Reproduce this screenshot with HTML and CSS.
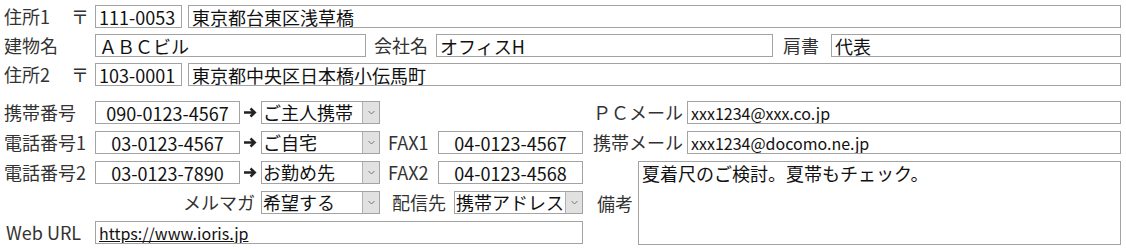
FILE: index.html
```html
<!DOCTYPE html>
<html lang="ja">
<head>
  <meta charset="UTF-8">
  <title>顧客情報</title>
  <link rel="stylesheet" href="styles.css">
</head>
<body>
<form class="sheet">
  <div class="row">
    <label class="lbl">住所1<span class="zip-mark">〒</span></label>
    <input type="text" class="box zip" value="111-0053">
    <input type="text" class="box addr" value="東京都台東区浅草橋">
  </div>
  <div class="row">
    <label class="lbl">建物名</label>
    <input type="text" class="box bldg" value="ＡＢＣビル">
    <label class="inl company-lbl">会社名</label>
    <input type="text" class="box company" value="オフィスH">
    <label class="inl title-lbl">肩書</label>
    <input type="text" class="box title" value="代表">
  </div>
  <div class="row">
    <label class="lbl">住所2<span class="zip-mark">〒</span></label>
    <input type="text" class="box zip" value="103-0001">
    <input type="text" class="box addr" value="東京都中央区日本橋小伝馬町">
  </div>

  <div class="lower">
    <div class="lower-left">
      <div class="row">
        <label class="lbl">携帯番号</label>
        <input type="text" class="box tel" value="090-0123-4567">
        <span class="arrow"><svg width="13" height="11" viewBox="0 0 13 11"><path d="M0 5.5H10.5M6.5 1.5L10.8 5.5L6.5 9.5" fill="none" stroke="#222" stroke-width="2.4"/></svg></span>
        <span class="sel"><select><option>ご主人携帯</option></select><span class="sel-btn"><svg width="7" height="5" viewBox="0 0 7 5"><path d="M0.5 1L3.5 4L6.5 1" fill="none" stroke="#777" stroke-width="1"/></svg></span></span>
      </div>
      <div class="row">
        <label class="lbl">電話番号1</label>
        <input type="text" class="box tel" value="03-0123-4567">
        <span class="arrow"><svg width="13" height="11" viewBox="0 0 13 11"><path d="M0 5.5H10.5M6.5 1.5L10.8 5.5L6.5 9.5" fill="none" stroke="#222" stroke-width="2.4"/></svg></span>
        <span class="sel"><select><option>ご自宅</option></select><span class="sel-btn"><svg width="7" height="5" viewBox="0 0 7 5"><path d="M0.5 1L3.5 4L6.5 1" fill="none" stroke="#777" stroke-width="1"/></svg></span></span>
        <label class="inl fax-lbl">FAX1</label>
        <input type="text" class="box tel" value="04-0123-4567">
      </div>
      <div class="row">
        <label class="lbl">電話番号2</label>
        <input type="text" class="box tel" value="03-0123-7890">
        <span class="arrow"><svg width="13" height="11" viewBox="0 0 13 11"><path d="M0 5.5H10.5M6.5 1.5L10.8 5.5L6.5 9.5" fill="none" stroke="#222" stroke-width="2.4"/></svg></span>
        <span class="sel"><select><option>お勤め先</option></select><span class="sel-btn"><svg width="7" height="5" viewBox="0 0 7 5"><path d="M0.5 1L3.5 4L6.5 1" fill="none" stroke="#777" stroke-width="1"/></svg></span></span>
        <label class="inl fax-lbl">FAX2</label>
        <input type="text" class="box tel" value="04-0123-4568">
      </div>
      <div class="row">
        <label class="lbl mag-lbl">メルマガ</label>
        <span class="sel"><select><option>希望する</option></select><span class="sel-btn"><svg width="7" height="5" viewBox="0 0 7 5"><path d="M0.5 1L3.5 4L6.5 1" fill="none" stroke="#777" stroke-width="1"/></svg></span></span>
        <label class="inl dest-lbl">配信先</label>
        <span class="sel dest"><select><option>携帯アドレス</option></select><span class="sel-btn"><svg width="7" height="5" viewBox="0 0 7 5"><path d="M0.5 1L3.5 4L6.5 1" fill="none" stroke="#777" stroke-width="1"/></svg></span></span>
      </div>
      <div class="row">
        <label class="lbl url-lbl">Web URL</label>
        <input type="text" class="box url" value="https://www.ioris.jp">
      </div>
    </div>

    <div class="lower-right">
      <label class="rlbl">ＰＣメール</label>
      <input type="text" class="box mail" value="xxx1234@xxx.co.jp">
      <label class="rlbl">携帯メール</label>
      <input type="text" class="box mail" value="xxx1234@docomo.ne.jp">
      <div class="memo">
        <label class="memo-lbl">備考</label>
        <textarea class="box memo-box">夏着尺のご検討。夏帯もチェック。</textarea>
      </div>
    </div>
  </div>
</form>
</body>
</html>
```

FILE: styles.css
```css
* {
  box-sizing: border-box;
}
body {
  margin: 0;
  background: #fff;
  color: #333;
  font-family: "Noto Sans CJK JP", sans-serif;
  font-size: 18px;
}
.sheet {
  width: 1126px;
  padding: 5px 5px 0 4px;
}
.row {
  display: flex;
  align-items: center;
  height: 23px;
  margin-bottom: 6px;
  line-height: 23px;
}
.lbl {
  flex: none;
  width: 91px;
  display: flex;
  justify-content: space-between;
  white-space: nowrap;
}
.zip-mark {
  padding-right: 6px;
}
.inl {
  flex: none;
  white-space: nowrap;
}

/* text boxes */
.box {
  height: 23px;
  border: 1px solid #a3a3a3;
  background: #fff;
  color: #111;
  font-family: "Noto Sans CJK JP", sans-serif;
  font-size: 18px;
  padding: 0 3px;
  margin: 0;
  outline: none;
}
.zip {
  width: 87px;
}
.addr {
  flex: 1;
  margin-left: 6px;
}
.bldg {
  width: 271px;
}
.company-lbl {
  margin: 0 8px;
}
.company {
  width: 337px;
}
.title-lbl {
  margin: 0 12px 0 10px;
}
.title {
  width: 290px;
}

/* lower block */
.lower {
  display: flex;
  margin-top: 15px;
}
.lower-left {
  width: 579px;
  flex: none;
}
.lower-left .row {
  margin-bottom: 7px;
}
.tel {
  width: 145px;
  text-align: center;
}
.arrow {
  width: 21px;
  flex: none;
  display: flex;
  justify-content: center;
}
.sel {
  flex: none;
  display: flex;
  width: 119px;
  height: 23px;
  border: 1px solid #a3a3a3;
  background: #fff;
  overflow: hidden;
}
.sel select {
  appearance: none;
  flex: 1;
  min-width: 0;
  height: 21px;
  border: none;
  background: transparent;
  color: #111;
  font-family: "Noto Sans CJK JP", sans-serif;
  font-size: 18px;
  line-height: 21px;
  padding: 0 0 0 1px;
  outline: none;
}
.sel-btn {
  flex: none;
  width: 17px;
  background: #e1e1e1;
  border-left: 1px solid #b0b0b0;
  display: flex;
  align-items: center;
  justify-content: center;
}
.fax-lbl {
  width: 50px;
  margin-left: 8px;
}
.mag-lbl {
  width: 257px;
  justify-content: flex-end;
  padding-right: 6px;
}
.dest-lbl {
  margin: 0 8px 0 12px;
}
.dest {
  width: 129px;
}
.url-lbl {
  padding-left: 2px;
}
.url {
  width: 488px;
  font-size: 16px;
  text-decoration: underline;
}

/* right side */
.lower-right {
  flex: 1;
  display: grid;
  grid-template-columns: 100px 1fr;
  grid-template-rows: 23px 23px 84px;
  column-gap: 4px;
  row-gap: 7px;
}
.rlbl {
  text-align: right;
  line-height: 23px;
  white-space: nowrap;
}
.mail {
  font-size: 16px;
}
.memo {
  grid-column: 1 / 3;
  display: flex;
  align-items: center;
}
.memo-lbl {
  margin: 0 5px 0 14px;
  width: 36px;
}
.memo-box {
  flex: 1;
  height: 84px;
  resize: none;
  padding: 1px 3px;
  line-height: 1.2;
}
```
